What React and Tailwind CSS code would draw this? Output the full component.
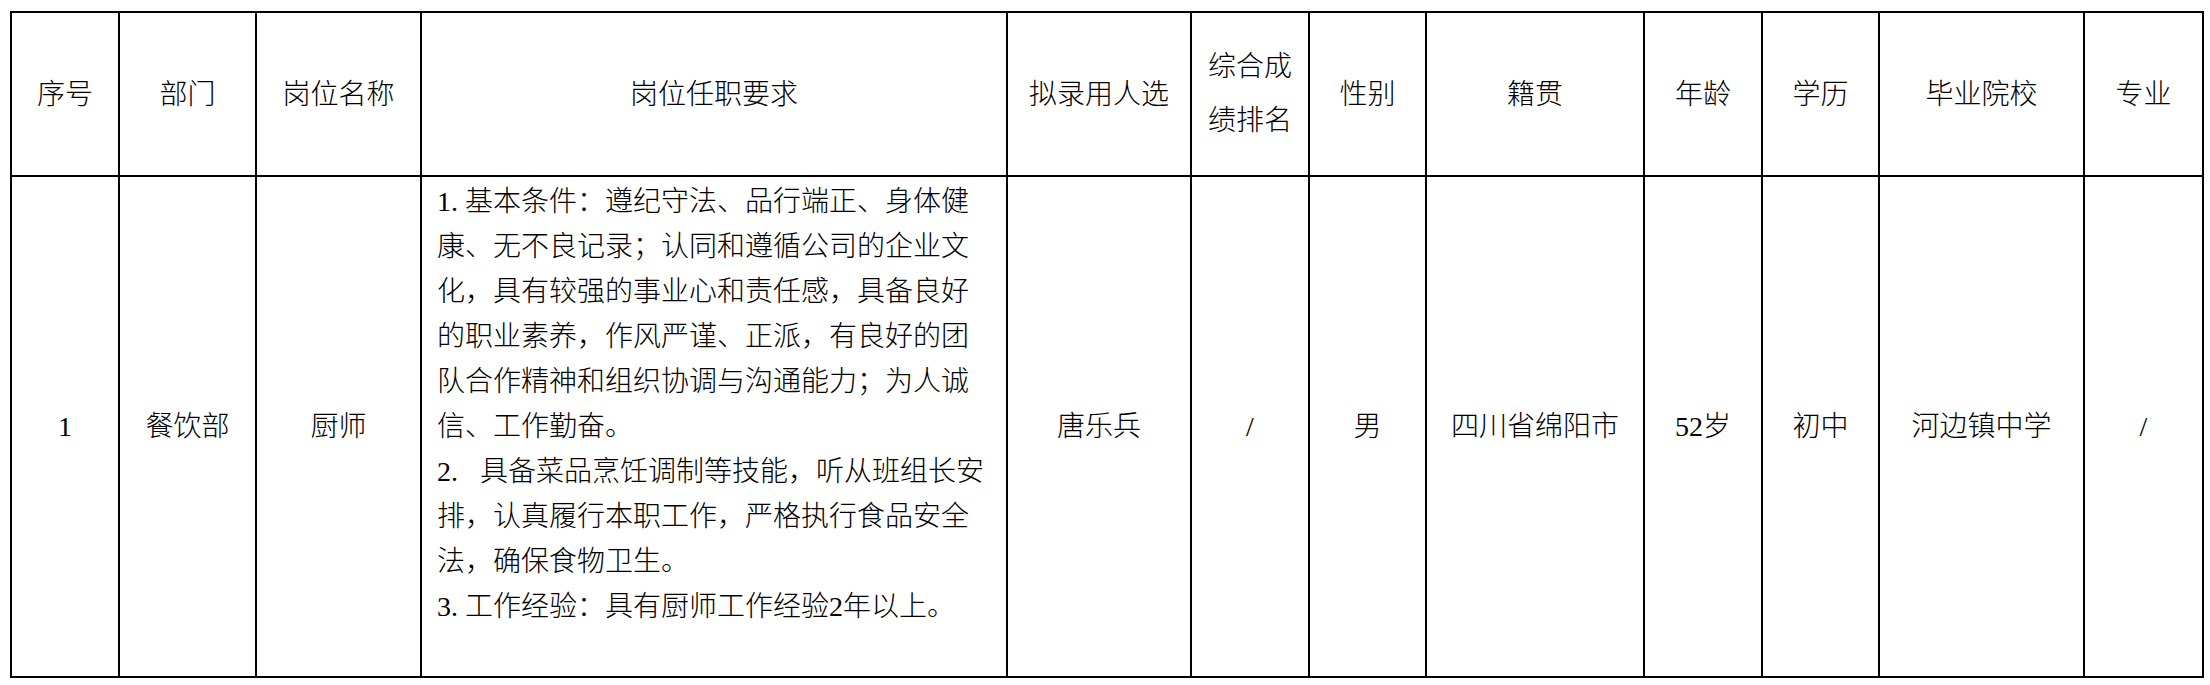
import React from "react";

const font = { fontFamily: '"Liberation Serif", "Noto Sans CJK SC", serif' };

const headers = [
  "序号",
  "部门",
  "岗位名称",
  "岗位任职要求",
  "拟录用人选",
  null,
  "性别",
  "籍贯",
  "年龄",
  "学历",
  "毕业院校",
  "专业",
];

function Cell({ children, className = "" }) {
  return (
    <div
      className={
        "border-r-2 border-b-2 border-black flex items-center justify-center text-center " +
        className
      }
    >
      {children}
    </div>
  );
}

export default function App() {
  const lines = [
    [null, "1.", "基本条件：遵纪守法、品行端正、身体健"],
    [null, null, "康、无不良记录；认同和遵循公司的企业文"],
    [null, null, "化，具有较强的事业心和责任感，具备良好"],
    [null, null, "的职业素养，作风严谨、正派，有良好的团"],
    [null, null, "队合作精神和组织协调与沟通能力；为人诚"],
    [null, null, "信、工作勤奋。"],
    ["w", "2.", "具备菜品烹饪调制等技能，听从班组长安"],
    [null, null, "排，认真履行本职工作，严格执行食品安全"],
    [null, null, "法，确保食物卫生。"],
    [null, "3.", "工作经验：具有厨师工作经验2年以上。"],
  ];

  return (
    <div className="w-[2210px] h-[685px] bg-white text-black" style={font}>
      <div className="pt-[11px] pl-[10px]">
        <div className="grid grid-cols-[108px_137px_165px_586px_184px_118px_117px_218px_118px_117px_205px_119px] grid-rows-[164px_501px] w-max border-l-2 border-t-2 border-black text-[28px] font-light">
          {headers.map((h, i) =>
            h === null ? (
              <Cell key={i}>
                <div className="leading-[54px]">
                  <div>综合成</div>
                  <div>绩排名</div>
                </div>
              </Cell>
            ) : (
              <Cell key={i}>
                <span className="leading-[45px] whitespace-nowrap">{h}</span>
              </Cell>
            )
          )}

          <Cell>
            <span>1</span>
          </Cell>
          <Cell>
            <span>餐饮部</span>
          </Cell>
          <Cell>
            <span>厨师</span>
          </Cell>
          <div className="border-r-2 border-b-2 border-black pl-[15px] pt-[2px] leading-[45px] text-left">
            {lines.map(([wide, num, text], i) => (
              <div key={i} className="whitespace-nowrap">
                {num && (
                  <span
                    className={
                      wide ? "inline-block w-[43px]" : "inline-block w-[28px]"
                    }
                  >
                    {num}
                  </span>
                )}
                {text}
              </div>
            ))}
          </div>
          <Cell>
            <span>唐乐兵</span>
          </Cell>
          <Cell>
            <span>/</span>
          </Cell>
          <Cell>
            <span>男</span>
          </Cell>
          <Cell>
            <span className="whitespace-nowrap">四川省绵阳市</span>
          </Cell>
          <Cell>
            <span>52岁</span>
          </Cell>
          <Cell>
            <span>初中</span>
          </Cell>
          <Cell>
            <span className="whitespace-nowrap">河边镇中学</span>
          </Cell>
          <Cell>
            <span>/</span>
          </Cell>
        </div>
      </div>
    </div>
  );
}
